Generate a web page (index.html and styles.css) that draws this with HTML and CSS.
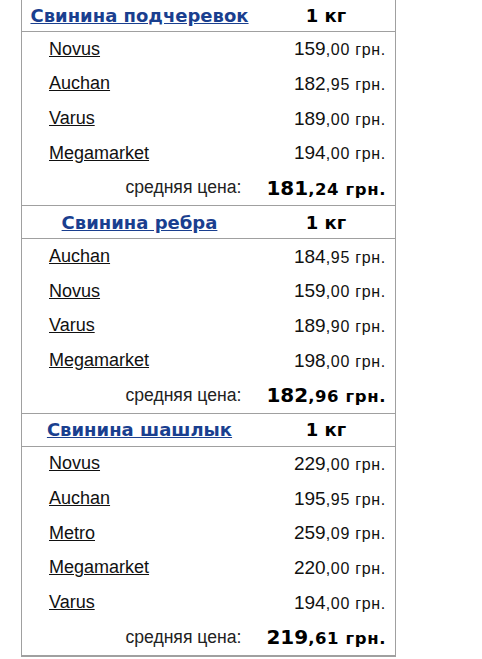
FILE: index.html
```html
<!DOCTYPE html>
<html lang="ru">
<head>
<meta charset="utf-8">
<title>Цены</title>
<link rel="stylesheet" href="styles.css">
</head>
<body>
<div class="table">
  <section class="product">
    <div class="head">
      <div class="name"><a href="#">Свинина подчеревок</a></div>
      <div class="unit">1 кг</div>
    </div>
    <div class="body">
      <div class="row"><a href="#" class="store">Novus</a><span class="price">159<small>,00 грн.</small></span></div>
      <div class="row"><a href="#" class="store">Auchan</a><span class="price">182<small>,95 грн.</small></span></div>
      <div class="row"><a href="#" class="store">Varus</a><span class="price">189<small>,00 грн.</small></span></div>
      <div class="row"><a href="#" class="store">Megamarket</a><span class="price">194<small>,00 грн.</small></span></div>
      <div class="row avg"><span class="label">средняя цена:</span><span class="avgprice">181<small>,24 грн.</small></span></div>
    </div>
  </section>
  <section class="product">
    <div class="head">
      <div class="name"><a href="#">Свинина ребра</a></div>
      <div class="unit">1 кг</div>
    </div>
    <div class="body">
      <div class="row"><a href="#" class="store">Auchan</a><span class="price">184<small>,95 грн.</small></span></div>
      <div class="row"><a href="#" class="store">Novus</a><span class="price">159<small>,00 грн.</small></span></div>
      <div class="row"><a href="#" class="store">Varus</a><span class="price">189<small>,90 грн.</small></span></div>
      <div class="row"><a href="#" class="store">Megamarket</a><span class="price">198<small>,00 грн.</small></span></div>
      <div class="row avg"><span class="label">средняя цена:</span><span class="avgprice">182<small>,96 грн.</small></span></div>
    </div>
  </section>
  <section class="product">
    <div class="head">
      <div class="name"><a href="#">Свинина шашлык</a></div>
      <div class="unit">1 кг</div>
    </div>
    <div class="body">
      <div class="row"><a href="#" class="store">Novus</a><span class="price">229<small>,00 грн.</small></span></div>
      <div class="row"><a href="#" class="store">Auchan</a><span class="price">195<small>,95 грн.</small></span></div>
      <div class="row"><a href="#" class="store">Metro</a><span class="price">259<small>,09 грн.</small></span></div>
      <div class="row"><a href="#" class="store">Megamarket</a><span class="price">220<small>,00 грн.</small></span></div>
      <div class="row"><a href="#" class="store">Varus</a><span class="price">194<small>,00 грн.</small></span></div>
      <div class="row avg"><span class="label">средняя цена:</span><span class="avgprice">219<small>,61 грн.</small></span></div>
    </div>
  </section>
</div>
</body>
</html>
```

FILE: styles.css
```css
html, body {
  margin: 0;
  padding: 0;
  background: #fff;
}

body {
  font-family: "Liberation Sans", Arial, sans-serif;
  color: #111;
}

.table {
  width: 375px;
  box-sizing: border-box;
  margin: -1px 0 0 21px;
  border-left: 1px solid #a0a0a0;
  border-right: 1px solid #a0a0a0;
  border-bottom: 2px solid #a0a0a0;
}

.product + .product {
  border-top: 1px solid #a0a0a0;
}

.head {
  display: grid;
  grid-template-columns: 235px 1fr;
  height: 33px;
  box-sizing: border-box;
  border-bottom: 1px solid #a0a0a0;
  align-items: center;
  font-family: "DejaVu Sans", Verdana, sans-serif;
  font-weight: bold;
  font-size: 18px;
}

.name {
  text-align: center;
}

.name a {
  color: #1a3f8f;
}

.unit {
  text-align: center;
  color: #000;
}

.body {
  padding: 0 9px 0 27px;
}

.row {
  display: flex;
  justify-content: space-between;
  align-items: center;
  height: 34.67px;
  font-size: 18px;
}

.store {
  color: #111;
}

.price {
  font-size: 19px;
  color: #111;
}

.price small {
  font-size: 16px;
  letter-spacing: 0.7px;
}

.avg {
  justify-content: flex-end;
  gap: 25px;
}

.label {
  font-size: 17.6px;
  color: #222;
}

.avgprice {
  font-family: "DejaVu Sans", Verdana, sans-serif;
  font-weight: bold;
  font-size: 20px;
  color: #000;
}

.avgprice small {
  font-size: 16.5px;
  letter-spacing: 0.6px;
}
```
